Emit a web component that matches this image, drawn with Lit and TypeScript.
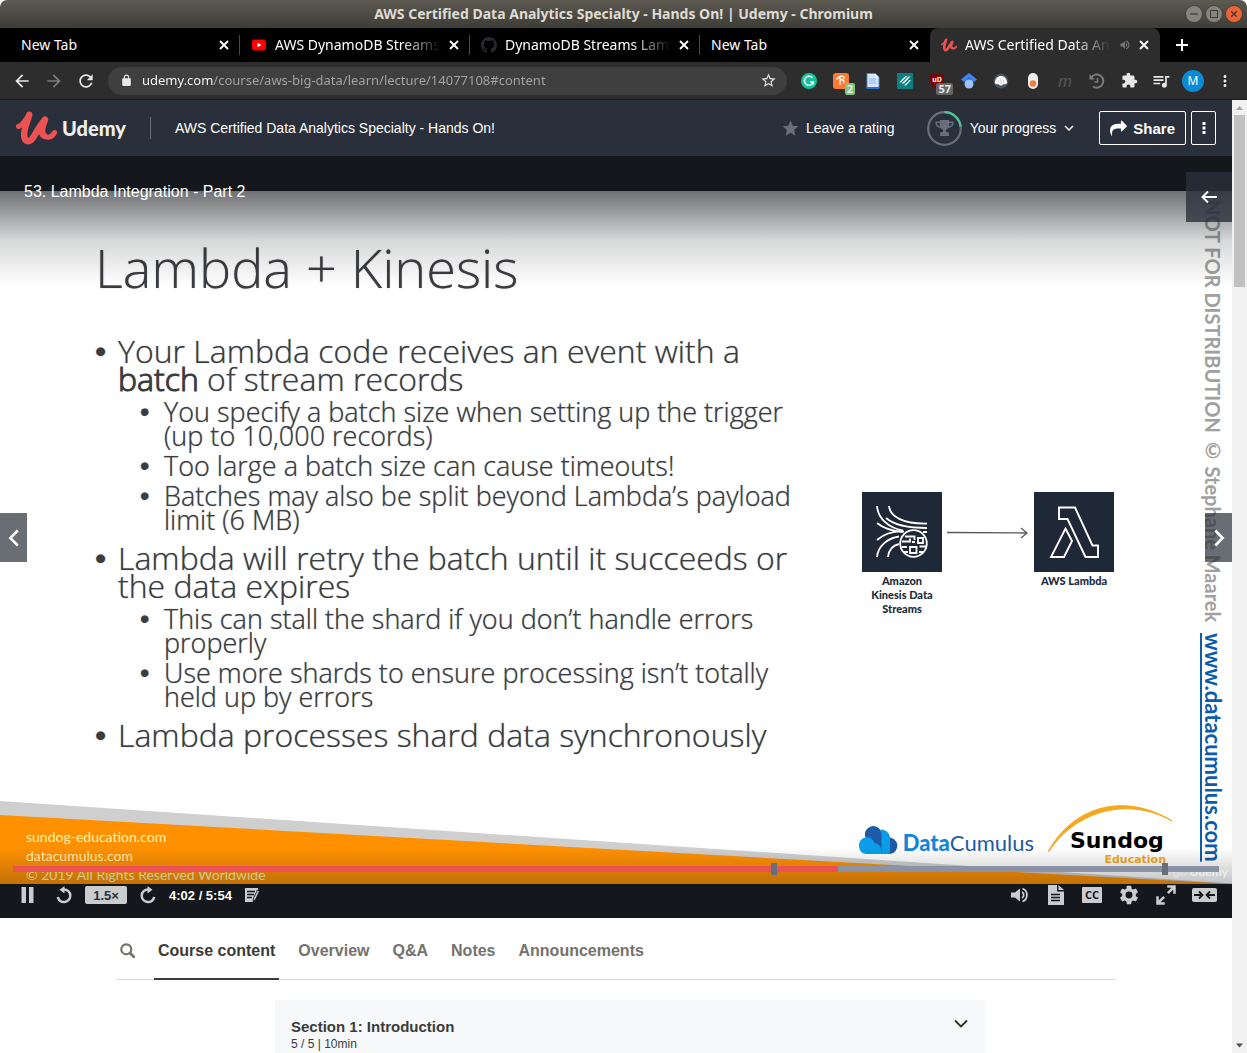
import { LitElement, html, css, svg, nothing, TemplateResult } from 'lit';
import { customElement } from 'lit/decorators.js';
import { classMap } from 'lit/directives/class-map.js';

const icon = (size: number, box: string, body: unknown) =>
  html`<svg width=${size} height=${size} viewBox=${box} aria-hidden="true">${body}</svg>`;

const path24 = (size: number, d: string) =>
  icon(size, '0 0 24 24', svg`<path fill="currentColor" d=${d}></path>`);

const D = {
  back: 'M20 11H7.83l5.59-5.59L12 4l-8 8 8 8 1.41-1.41L7.83 13H20z',
  forward: 'M4 13h12.17l-5.59 5.59L12 20l8-8-8-8-1.41 1.41L16.17 11H4z',
  reload:
    'M17.65 6.35C16.2 4.9 14.21 4 12 4c-4.42 0-7.99 3.58-7.99 8s3.57 8 7.99 8c3.73 0 6.84-2.55 7.73-6h-2.08c-.82 2.33-3.04 4-5.65 4-3.31 0-6-2.69-6-6s2.69-6 6-6c1.66 0 3.14.69 4.22 1.78L13 11h7V4z',
  lock: 'M18 8h-1V6c0-2.76-2.24-5-5-5S7 3.24 7 6v2H6c-1.1 0-2 .9-2 2v10c0 1.1.9 2 2 2h12c1.1 0 2-.9 2-2V10c0-1.1-.9-2-2-2zM9 6c0-1.66 1.34-3 3-3s3 1.34 3 3v2H9V6z',
  starLine:
    'M22 9.24l-7.19-.62L12 2 9.19 8.63 2 9.24l5.46 4.73L5.82 21 12 17.27 18.18 21l-1.63-7.03L22 9.24zM12 15.4l-3.76 2.27 1-4.28-3.32-2.88 4.38-.38L12 6.1l1.71 4.04 4.38.38-3.32 2.88 1 4.28L12 15.4z',
  star: 'M12 17.27L18.18 21l-1.64-7.03L22 9.24l-7.19-.61L12 2 9.19 8.63 2 9.24l5.46 4.73L5.82 21z',
  puzzle:
    'M20.5 11H19V7c0-1.1-.9-2-2-2h-4V3.5C13 2.12 11.88 1 10.5 1S8 2.12 8 3.5V5H4c-1.1 0-1.99.9-1.99 2v3.8H3.5c1.49 0 2.7 1.21 2.7 2.7s-1.21 2.7-2.7 2.7H2V20c0 1.1.9 2 2 2h3.8v-1.5c0-1.49 1.21-2.7 2.7-2.7 1.49 0 2.7 1.21 2.7 2.7V22H17c1.1 0 2-.9 2-2v-4h1.5c1.38 0 2.5-1.12 2.5-2.5S21.88 11 20.5 11z',
  queue:
    'M15 6H3v2h12V6zm0 4H3v2h12v-2zM3 16h8v-2H3v2zM17 6v8.18c-.31-.11-.65-.18-1-.18-1.66 0-3 1.34-3 3s1.34 3 3 3 3-1.34 3-3V8h3V6h-5z',
  dots: 'M12 8c1.1 0 2-.9 2-2s-.9-2-2-2-2 .9-2 2 .9 2 2 2zm0 2c-1.1 0-2 .9-2 2s.9 2 2 2 2-.9 2-2-.9-2-2-2zm0 6c-1.1 0-2 .9-2 2s.9 2 2 2 2-.9 2-2-.9-2-2-2z',
  speaker:
    'M3 9v6h4l5 5V4L7 9H3zm13.5 3c0-1.77-1.02-3.29-2.5-4.03v8.05c1.48-.73 2.5-2.25 2.5-4.02zM14 3.23v2.06c2.89.86 5 3.54 5 6.71s-2.11 5.85-5 6.71v2.06c4.01-.91 7-4.49 7-8.77s-2.99-7.86-7-8.77z',
  github:
    'M8 0C3.58 0 0 3.58 0 8c0 3.54 2.29 6.53 5.47 7.59.4.07.55-.17.55-.38 0-.19-.01-.82-.01-1.49-2.01.37-2.53-.49-2.69-.94-.09-.23-.48-.94-.82-1.13-.28-.15-.68-.52-.01-.53.63-.01 1.08.58 1.23.82.72 1.21 1.87.87 2.33.66.07-.52.28-.87.51-1.07-1.78-.2-3.64-.89-3.64-3.95 0-.87.31-1.59.82-2.15-.08-.2-.36-1.02.08-2.12 0 0 .67-.21 2.2.82.64-.18 1.32-.27 2-.27s1.36.09 2 .27c1.53-1.04 2.2-.82 2.2-.82.44 1.1.16 1.92.08 2.12.51.56.82 1.27.82 2.15 0 3.07-1.87 3.75-3.65 3.95.29.25.54.73.54 1.48 0 1.07-.01 1.93-.01 2.2 0 .21.15.46.55.38A8.01 8.01 0 0 0 16 8c0-4.42-3.58-8-8-8z',
  share:
    'M1792 640q0 26-19 45l-512 512q-19 19-45 19t-45-19-19-45v-256h-224q-98 0-175.5 6t-154 21.5-133 42.5-105.5 69.5-80 101-48.5 138.5-17.5 181q0 55 5 123 0 6 2.5 23.5t2.5 26.5q0 15-8.5 25t-23.5 10q-16 0-28-17-7-9-13-22t-13.5-30-10.5-24q-127-285-127-451 0-199 53-333 162-403 875-403h224v-256q0-26 19-45t45-19 45 19l512 512q19 19 19 45z',
  gear:
    'M19.43 12.98c.04-.32.07-.64.07-.98s-.03-.66-.07-.98l2.11-1.65c.19-.15.24-.42.12-.64l-2-3.46c-.12-.22-.39-.3-.61-.22l-2.49 1c-.52-.4-1.08-.73-1.69-.98l-.38-2.65C14.46 2.18 14.25 2 14 2h-4c-.25 0-.46.18-.49.42l-.38 2.65c-.61.25-1.17.59-1.69.98l-2.49-1c-.23-.09-.49 0-.61.22l-2 3.46c-.13.22-.07.49.12.64l2.11 1.65c-.04.32-.07.65-.07.98s.03.66.07.98l-2.11 1.65c-.19.15-.24.42-.12.64l2 3.46c.12.22.39.3.61.22l2.49-1c.52.4 1.08.73 1.69.98l.38 2.65c.03.24.24.42.49.42h4c.25 0 .46-.18.49-.42l.38-2.65c.61-.25 1.17-.59 1.69-.98l2.49 1c.23.09.49 0 .61-.22l2-3.46c.12-.22.07-.49-.12-.64l-2.11-1.65zM12 15.8a3.8 3.8 0 1 1 0-7.6 3.8 3.8 0 0 1 0 7.6z',
};

const udemyMark = (w: number, h: number) => html`<svg width=${w} height=${h} viewBox="0 0 41 34" aria-hidden="true">
  <path d="M2.500 15.500C7 14.500 9 9 13 4M27 24C30.500 28 36 26.500 38.600 21.500"
    fill="none" stroke="#ec5252" stroke-width="5" stroke-linecap="round" stroke-linejoin="round"></path>
  <path d="M13.200 3.700C11.500 11 7.500 18 8.200 25C9 32 14 31.500 17.500 26C21 20 25 13 29 8.700C27 14 23.500 21 28 24.500"
    fill="none" stroke="#ec5252" stroke-width="6.500" stroke-linecap="round" stroke-linejoin="round"></path>
</svg>`;

interface BrowserTab {
  title: string;
  favicon?: TemplateResult;
  active?: boolean;
  divided?: boolean;
}

@customElement('browser-chrome')
class BrowserChrome extends LitElement {
  static styles = css`
    :host { display: block; font-family: 'Noto Sans', 'Open Sans', sans-serif; color: #fff; }
    button { font: inherit; color: inherit; background: none; border: 0; padding: 0; display: flex; align-items: center; justify-content: center; }
    svg { display: block; flex: none; }
    .frame { background: #fff; }
    .titlebar {
      display: grid; grid-template-columns: 1fr auto 1fr; align-items: center; height: 28px; padding: 0 5px;
      background: linear-gradient(#5d5a51, #3d3c37); border-radius: 7px 7px 0 0;
      font-size: 14px; font-weight: 700; line-height: 20px; color: #dfdbd2;
    }
    .wm { display: flex; justify-content: flex-end; gap: 4px; }
    .wm button { width: 16px; height: 16px; border-radius: 50%; background: #85837b; color: #3c3b37; box-shadow: 0 0 0 1px #45433e; }
    .wm .close { background: #ee6334; }
    .strip { display: flex; height: 34px; padding-left: 10px; background: #000; font-size: 14px; line-height: 20px; }
    .tab { position: relative; box-sizing: border-box; flex: 0 1 230px; min-width: 0; display: flex; align-items: center; gap: 8px; padding: 0 11px 1px; }
    .tab.divided::after { content: ''; position: absolute; right: 0; top: 7px; width: 1px; height: 20px; background: #4a4a4a; }
    .tab.active { background: #2d2d2d; border-radius: 8px 8px 0 0; }
    .tab .name { flex: 1; min-width: 0; overflow: hidden; white-space: nowrap; }
    .tab .fade { -webkit-mask-image: linear-gradient(90deg, #000 calc(100% - 40px), transparent); mask-image: linear-gradient(90deg, #000 calc(100% - 40px), transparent); }
    .sound { color: #77787a; }
    .plus { width: 44px; }
    .bar { display: flex; align-items: center; height: 37px; padding: 0 6px; background: #2d2d2d; border-bottom: 1px solid #1c1c1c; color: #e8e8e8; }
    .tool { position: relative; width: 32px; height: 32px; flex: none; }
    .dim { color: #7b7b7b; }
    .box { flex: 1; min-width: 0; display: flex; align-items: center; gap: 9px; height: 28px; margin: 0 6px; padding: 0 10px 0 12px; border-radius: 14px; background: #3f3f3f; }
    .url {
      flex: 1; min-width: 0; border: 0; padding: 0 0 2px; outline: 0; font: inherit; font-size: 13px; color: transparent;
      background: linear-gradient(90deg, #fff 71px, #a5a5a5 71px); -webkit-background-clip: text; background-clip: text;
    }
    .badge { position: absolute; right: 2px; bottom: 2px; padding: 0 2px; border-radius: 2px; background: #7cc47f; font-size: 11px; font-weight: 700; line-height: 12px; }
    .badge.grey { right: 0; background: #666; }
    .avatar { width: 22px; height: 22px; border-radius: 50%; background: #0b8ad6; font-size: 12px; line-height: 22px; text-align: center; color: #fff; }
    .em { font-style: italic; font-size: 16px; color: #555; }
  `;

  private cross = icon(10, '0 0 10 10', svg`<path d="M1 1L9 9M9 1L1 9" stroke="currentColor" stroke-width="1.800"></path>`);

  private tabs: BrowserTab[] = [
    { title: 'New Tab', divided: true },
    {
      title: 'AWS DynamoDB Streams', divided: true,
      favicon: icon(16, '0 0 16 16', svg`<rect x="1" y="2.500" width="14" height="11" rx="3" fill="#f00"></rect><path d="M6.500 5.700v4.600l4-2.300z" fill="#fff"></path>`),
    },
    { title: 'DynamoDB Streams Lambda', divided: true, favicon: icon(16, '0 0 16 16', svg`<path fill="#24292e" d=${D.github}></path>`) },
    { title: 'New Tab' },
    { title: 'AWS Certified Data Analytics', active: true, favicon: udemyMark(16, 14) },
  ];

  private extensions: { label: string; art: TemplateResult }[] = [
    { label: 'Grammar check', art: icon(16, '0 0 16 16', svg`<circle cx="8" cy="8" r="8" fill="#15c39a"></circle><path d="M11.500 5A4.500 4.500 0 1 0 12.300 9H9.200M12.300 9v2.500" fill="none" stroke="#fff" stroke-width="1.400"></path>`) },
    { label: 'Coupons', art: html`${icon(16, '0 0 16 16', svg`<rect width="16" height="16" rx="3" fill="#ff7a30"></rect><path d="M7 3v9M3.500 6.500C6 3 11 2 11 4.500S8 7 7 6.500C10 6.500 12 8 10.500 10.500" fill="none" stroke="#fff" stroke-width="1.300"></path>`)}<span class="badge">2</span>` },
    { label: 'Docs', art: icon(16, '0 0 16 16', svg`<path d="M2 .5h8l4 4v11H2z" fill="#d5e6fb" stroke="#4a86d8"></path><path d="M10 .5v4h4z" fill="#fff"></path><path d="M4 6h7M4 8h7M4 10h7" stroke="#8ab4ea"></path><path d="M2 14h12v2H2z" fill="#2f6fd0"></path>`) },
    { label: 'Notes', art: icon(16, '0 0 16 16', svg`<rect width="16" height="16" rx="1" fill="#0d7f83"></rect><path d="M2 9.500L8.500 3h2L4 9.500zM4.500 10.500L11.500 3.500h2L7 10.500zM7 12.500L12.500 7h1.500L9 12.500z" fill="#e9f5f5"></path>`) },
    { label: 'Ad blocker', art: html`${icon(16, '0 0 16 16', svg`<path d="M8 0q3 2 7 1.500V8q0 5-7 8-7-3-7-8V1.500Q5 2 8 0z" fill="#800000"></path><text x="8" y="9" font-size="7" font-weight="700" fill="#fff" text-anchor="middle" font-family="Noto Sans">uD</text>`)}<span class="badge grey">57</span>` },
    { label: 'Scholar', art: icon(16, '0 0 16 16', svg`<path d="M8 0L16 6.500 13 9H3L0 6.500z" fill="#4285f4"></path><circle cx="8" cy="11" r="4.500" fill="#a0c3ff"></circle><path d="M3.500 9.500a4.800 4.800 0 0 1 9 0L13 8 8 4 3 8z" fill="#356ac3"></path>`) },
    { label: 'Shell', art: icon(16, '0 0 16 16', svg`<circle cx="8" cy="8" r="7.500" fill="#47535f"></circle><path d="M1.800 10C2 5.500 5 3 8 3s6 2.500 6.200 7q-1.500 2-3.500 1l-1.700 1.500H7L5.300 11q-2 1-3.500-1z" fill="#fff"></path><path d="M8 11V6M6 10L5 7M10 10l1-3" stroke="#aab2ba" stroke-width=".6"></path>`) },
    { label: 'Toggle', art: icon(16, '0 0 16 16', svg`<rect x="3" y="0" width="10" height="16" rx="5" fill="#eee"></rect><circle cx="8" cy="10.500" r="3.200" fill="#f47b3a"></circle>`) },
    { label: 'Mendeley', art: html`<span class="em">m</span>` },
    { label: 'History', art: html`<span class="dim">${icon(18, '0 0 18 18', svg`<path d="M3.200 5.500A6.600 6.600 0 1 1 5 14.500" fill="none" stroke="currentColor" stroke-width="2"></path><path d="M1.500 2v5.500H7z" fill="currentColor"></path><path d="M9.500 6v4h-3" fill="none" stroke="currentColor" stroke-width="1.600"></path>`)}</span>` },
    { label: 'Extensions', art: path24(17, D.puzzle) },
    { label: 'Media controls', art: path24(20, D.queue) },
    { label: 'Profile', art: html`<span class="avatar">M</span>` },
    { label: 'Menu', art: path24(18, D.dots) },
  ];

  render() {
    return html`
      <header class="frame">
        <div class="titlebar">
          <span></span>
          <span>AWS Certified Data Analytics Specialty - Hands On! | Udemy - Chromium</span>
          <div class="wm">
            <button aria-label="Minimize">${icon(10, '0 0 10 10', svg`<path d="M1 5h8" stroke="currentColor" stroke-width="1.200"></path>`)}</button>
            <button aria-label="Maximize">${icon(10, '0 0 10 10', svg`<path d="M1.500 1.500h7v7h-7z" fill="none" stroke="currentColor"></path>`)}</button>
            <button class="close" aria-label="Close window">${icon(8, '0 0 10 10', svg`<path d="M1.500 1.500l7 7M8.500 1.500l-7 7" stroke="currentColor" stroke-width="1.600"></path>`)}</button>
          </div>
        </div>
        <div class="strip">
          ${this.tabs.map((t) => html`
            <div class=${classMap({ tab: true, active: !!t.active, divided: !!t.divided })}>
              ${t.favicon ?? nothing}
              <span class=${classMap({ name: true, fade: t.title !== 'New Tab' })}>${t.title}</span>
              ${t.active ? html`<span class="sound">${path24(12, D.speaker)}</span>` : nothing}
              <button aria-label="Close tab">${this.cross}</button>
            </div>`)}
          <button class="plus" aria-label="New tab">${icon(12, '0 0 12 12', svg`<path d="M6 0v12M0 6h12" stroke="currentColor" stroke-width="2"></path>`)}</button>
        </div>
        <div class="bar">
          <button class="tool" aria-label="Back">${path24(20, D.back)}</button>
          <button class="tool dim" aria-label="Forward">${path24(20, D.forward)}</button>
          <button class="tool" aria-label="Reload">${path24(20, D.reload)}</button>
          <div class="box">
            ${path24(13, D.lock)}
            <input class="url" aria-label="Address" value="udemy.com/course/aws-big-data/learn/lecture/14077108#content" />
            <button aria-label="Bookmark">${path24(17, D.starLine)}</button>
          </div>
          ${this.extensions.map((e) => html`<button class="tool" aria-label=${e.label}>${e.art}</button>`)}
        </div>
      </header>`;
  }
}

@customElement('course-header')
class CourseHeader extends LitElement {
  static styles = css`
    :host { display: block; background: #29303b; color: #fff; font-size: 14px; }
    svg { display: block; flex: none; }
    a { color: inherit; text-decoration: none; }
    button { font: inherit; color: inherit; background: none; border: 0; padding: 0; display: flex; align-items: center; justify-content: center; }
    .row { display: flex; align-items: center; height: 56px; padding: 0 16px; white-space: nowrap; }
    .logo { display: flex; align-items: center; gap: 5px; font: 900 20px/24px Lato, sans-serif; color: #f0efec; }
    .course { margin-left: 24px; padding-left: 24px; border-left: 1px solid #686f7a; line-height: 22px; }
    .rate { margin-left: auto; gap: 6px; }
    .star, .caret { color: #686f7a; }
    .progress { margin: 0 25px 0 32px; gap: 8px; }
    .progress .caret { color: #fff; }
    .outlined { height: 34px; border: 1px solid #fff; border-radius: 2px; font-size: 15px; font-weight: 700; box-sizing: border-box; }
    .share { gap: 6px; padding: 0 10px; }
    .more { width: 25px; margin-left: 5px; }
  `;
  render() {
    return html`
      <header class="row">
        <a class="logo" href="#home">${udemyMark(41, 34)}<span>Udemy</span></a>
        <a class="course" href="#course">AWS Certified Data Analytics Specialty - Hands On!</a>
        <button class="rate"><span class="star">${path24(19, D.star)}</span>Leave a rating</button>
        <button class="progress">
          ${icon(35, '0 0 35 35', svg`
            <circle cx="17.500" cy="17.500" r="16.300" fill="none" stroke="#686f7a" stroke-width="2.200"></circle>
            <path d="M17.500 1.200A16.300 16.300 0 0 1 33.600 15.500" fill="none" stroke="#50c594" stroke-width="2.200"></path>
            <path d="M13 9h9v1.500h4.500v2c0 2.500-2.500 4.200-5.200 4.500-.8 1-1.700 1.600-2.300 1.800v2.200h1.500c1 0 1.500.8 1.500 2v2h-9v-2c0-1.200.5-2 1.500-2H16v-2.200c-.6-.2-1.500-.8-2.300-1.800C11 16.700 8.500 15 8.500 12.500v-2H13zm-3 3v.5c0 1.200 1.200 2.300 3 2.700-.2-1-.3-2-.3-3.200zm15 0h-2.700c0 1.200-.1 2.200-.3 3.200 1.800-.4 3-1.500 3-2.700z" fill="#686f7a" fill-rule="evenodd"></path>`)}
          Your progress
          <span class="caret">${icon(10, '0 0 10 10', svg`<path d="M1 3l4 4 4-4" fill="none" stroke="currentColor" stroke-width="1.500"></path>`)}</span>
        </button>
        <button class="outlined share">${icon(17, '0 0 1792 1792', svg`<path fill="currentColor" d=${D.share}></path>`)}Share</button>
        <button class="outlined more" aria-label="More">${icon(12, '0 0 12 12', svg`<path d="M4.500 0h3v3h-3zM4.500 4.500h3v3h-3zM4.500 9h3v3h-3z" fill="currentColor"></path>`)}</button>
      </header>`;
  }
}

interface Point { text: TemplateResult; sub?: string[][]; }

@customElement('lecture-slide')
class LectureSlide extends LitElement {
  static styles = css`
    :host { display: block; isolation: isolate; }
    svg { display: block; }
    .slide {
      position: relative; display: grid; grid-template-columns: 1fr auto 118px; grid-template-rows: 1fr auto;
      aspect-ratio: 16 / 9; overflow: hidden; background: #fff; color: #3b3c3f;
      font-family: 'Open Sans', 'Noto Sans', sans-serif; font-weight: 300;
    }
    .wedge { position: absolute; left: 0; bottom: 0; width: 100%; height: 84px; }
    .copy { padding: 44px 0 0 95px; white-space: nowrap; text-shadow: 0 0 1px rgba(59,60,63,.7); }
    h1 { margin: 0; font-size: 54px; font-weight: inherit; line-height: 64px; }
    ul { margin: 0; padding: 0; list-style: none; }
    .points { display: grid; gap: 12px; margin-top: 38px; font-size: 32px; line-height: 28px; }
    .point { display: grid; grid-template-columns: 23px 1fr; }
    .point::before, .subpoint::before { content: '•'; font-family: 'Liberation Sans', sans-serif; }
    .subs { grid-column: 2; display: grid; gap: 6px; margin-top: 7px; padding-left: 22px; font-size: 27px; line-height: 24px; }
    .subpoint { display: grid; grid-template-columns: 24px 1fr; }
    .heavy { -webkit-text-stroke: 1px #3b3c3f; }
    .diagram { display: flex; align-items: flex-start; padding-top: 301px; font: 900 11px/14px Lato, sans-serif; color: #222b3a; }
    .node { width: 80px; margin: 0; text-align: center; }
    .node figcaption { margin-top: 2px; }
    .link { margin: 35px 6px 0 5px; }
    .mark {
      grid-column: 3; grid-row: 1 / 3; writing-mode: vertical-rl; justify-self: end; padding: 9px 7px 0 0; white-space: nowrap;
      font: 700 20px/24px Lato, 'Open Sans', sans-serif; color: #a0a0a0; z-index: 1;
    }
    .mark a { margin-inline-start: 6px; font-size: 22px; color: #0b5cad; }
    .foot { grid-column: 1 / 3; display: flex; justify-content: space-between; position: relative; height: 84px; margin-right: -60px; }
    .legal { padding: 27px 0 0 26px; font: 400 14px/19px Lato, sans-serif; color: #fff3b0; }
    .brands { display: flex; align-items: flex-start; gap: 14px; }
    .data { display: flex; gap: 4px; align-items: center; margin-top: 26px; font: 400 22px/30px Lato, sans-serif; color: #1d5ba6; }
    .data svg { margin-bottom: 6px; }
    .data b { font-weight: 900; color: #1486d8; }
    .sundog { position: relative; width: 126px; padding: 28px 0 0 22px; box-sizing: border-box; font: 700 22px/26px 'DejaVu Sans', sans-serif; color: #000; }
    .sundog svg { position: absolute; left: 0; top: 5px; }
    .edu { display: block; padding-right: 8px; text-align: right; font-size: 11px; line-height: 12px; color: #f5a81c; }
  `;

  private points: Point[] = [
    {
      text: html`Your Lambda code receives an event with a<br /><span class="heavy">batch</span> of stream records`,
      sub: [
        ['You specify a batch size when setting up the trigger', '(up to 10,000 records)'],
        ['Too large a batch size can cause timeouts!'],
        ['Batches may also be split beyond Lambda’s payload', 'limit (6 MB)'],
      ],
    },
    {
      text: html`Lambda will retry the batch until it succeeds or<br />the data expires`,
      sub: [
        ['This can stall the shard if you don’t handle errors', 'properly'],
        ['Use more shards to ensure processing isn’t totally', 'held up by errors'],
      ],
    },
    { text: html`Lambda processes shard data synchronously` },
  ];

  render() {
    return html`
      <article class="slide">
        <svg class="wedge" viewBox="0 0 1232 84" preserveAspectRatio="none" aria-hidden="true">
          <path d="M0 1L1232 83.500V84H0z" fill="#d0cfd0"></path><path d="M0 15L1232 84H0z" fill="#ff9000"></path>
        </svg>
        <div class="copy">
          <h1>Lambda + Kinesis</h1>
          <ul class="points">
            ${this.points.map((p) => html`
              <li class="point"><span>${p.text}</span>
                ${p.sub ? html`<ul class="subs">${p.sub.map((lines) => html`
                  <li class="subpoint"><span>${lines.map((l, i) => html`${i ? html`<br />` : nothing}${l}`)}</span></li>`)}</ul>` : nothing}
              </li>`)}
          </ul>
        </div>
        <div class="diagram">
          <figure class="node">
            <svg width="80" height="80" viewBox="0 0 80 80" aria-hidden="true">
              <rect width="80" height="80" fill="#1f2836"></rect>
              <g fill="none" stroke="#fff" stroke-width="1.800">
                <path d="M15 14C16 27 27 36 41 38.500M27 14C28 25 42 32 65 31.500M65 36C46 36 32 33 24 26M15 31C20 35 28 39 41 40M15 48C22 42 30 39 42 39.500M15 65C16 54 26 46 37 44.500M26 65C27 57 32 53 37 52M61 40h4"></path>
                <circle cx="51.500" cy="51.500" r="13.300"></circle>
                <path d="M43 44.500h9.500v3.500M40 49.500h8v-3M56 46h5v5h-5zM40 55h5M48 55h6.500v6H48zM57.500 54.500h7M42 60h4M57 60h5M53 50h-3"></path>
              </g>
            </svg>
            <figcaption>Amazon<br />Kinesis Data<br />Streams</figcaption>
          </figure>
          <svg class="link" width="81" height="12" viewBox="0 0 81 12" aria-hidden="true"><path d="M0 5.500L80 6M74 1l6 5-6 5" fill="none" stroke="#555a63" stroke-width="1.300"></path></svg>
          <figure class="node">
            <svg width="80" height="80" viewBox="0 0 80 80" aria-hidden="true">
              <rect width="80" height="80" fill="#1f2836"></rect>
              <path d="M25 15.500H41L58.500 53.500H64V65H51.500L33.500 27H25zM31.500 36.500L38 49 30 65H17z" fill="none" stroke="#fff" stroke-width="1.900"></path>
            </svg>
            <figcaption>AWS Lambda</figcaption>
          </figure>
        </div>
        <div class="mark">NOT FOR DISTRIBUTION © Stephane Maarek <a href="#datacumulus">www.datacumulus.com</a></div>
        <footer class="foot">
          <div class="legal">sundog-education.com<br />datacumulus.com<br />© 2019 All Rights Reserved Worldwide</div>
          <div class="brands">
            <div class="data">
              <svg width="42" height="28" viewBox="0 0 42 28" aria-hidden="true">
                <path d="M31 11.500A8.300 8.300 0 0 1 33 28H30z" fill="#1d5ba6"></path>
                <path d="M24 3.500A9 9 0 0 1 33 11V28H22z" fill="#0b9de8"></path>
                <path d="M8 10A8.300 8.300 0 0 1 24.500 7V28H16z" fill="#1d5ba6"></path>
                <path d="M9 28A8.500 8.500 0 0 1 8 11.500Q15 10.500 17.500 17 24.500 17.500 25 28z" fill="#0b9de8"></path>
              </svg>
              <span><b>Data</b>Cumulus</span>
            </div>
            <div class="sundog">
              <svg width="126" height="48" viewBox="0 0 126 48" aria-hidden="true"><path d="M0 47C24 2 76-14 124 16 80-9 28 6 2 45z" fill="#f5a81c" stroke="#f5a81c"></path></svg>
              Sundog<span class="edu">Education</span>
            </div>
          </div>
        </footer>
      </article>`;
  }
}

@customElement('lecture-player')
class LecturePlayer extends LitElement {
  static styles = css`
    :host { display: block; }
    svg { display: block; flex: none; }
    button { font: inherit; color: inherit; background: none; border: 0; padding: 0; display: flex; align-items: center; justify-content: center; }
    .player { position: relative; padding-top: 35px; background: #14171c; color: #fff; }
    .stage { position: relative; }
    .shade { position: absolute; inset: 0 0 auto; height: 130px; background: linear-gradient(rgba(20,23,28,.9), rgba(20,23,28,.61) 35px, rgba(20,23,28,.17) 85px, rgba(20,23,28,0)); }
    .floor { position: absolute; inset: auto 0 0; height: 36px; background: linear-gradient(rgba(20,23,28,0), rgba(20,23,28,.26)); }
    .title { position: absolute; left: 24px; top: 26px; margin: 0; font-size: 16px; font-weight: 400; line-height: 20px; }
    .open { position: absolute; right: 0; top: 16px; width: 46px; height: 50px; background: rgba(41,48,59,.8); }
    .side { position: absolute; top: 322px; width: 27px; height: 49px; background: rgba(41,48,59,.7); }
    .prev { left: 0; }
    .next { right: 0; }
    .seek { position: absolute; left: 13px; right: 13px; bottom: 12px; height: 6px; }
    .seek input { display: block; appearance: none; -webkit-appearance: none; width: 100%; height: 6px; margin: 0; background: linear-gradient(90deg, #ec5252 68.4%, #8a92a3 68.4%); }
    .seek input::-webkit-slider-thumb { -webkit-appearance: none; width: 1px; height: 6px; opacity: 0; }
    .note { position: absolute; top: -3px; width: 6px; height: 12px; margin-left: -3px; background: #686f7a; }
    .ghost { position: absolute; right: 4px; bottom: 4px; display: flex; align-items: center; gap: 3px; font: 700 12px/16px Lato, sans-serif; color: #fff; opacity: .6; filter: grayscale(1) brightness(2); }
    .controls { display: flex; align-items: center; justify-content: space-between; height: 22px; padding: 0 15px 12px 20px; color: #cbccce; font-size: 13px; font-weight: 700; }
    .group { display: flex; align-items: center; gap: 12px; }
    .right { gap: 16px; }
    .pause { margin-right: 7px; }
    .speed { width: 42px; height: 18px; border-radius: 2px; background: #cbccce; color: #29303b; }
    .time { color: #fff; }
  `;

  private replay = svg`<path d="M9 3.500a6.300 6.300 0 1 1-6.200 7.500" fill="none" stroke="currentColor" stroke-width="2.500"></path><path d="M9.500 0v7.500L4.500 3.800z" fill="currentColor"></path>`;

  render() {
    const stroke = (size: number, d: string, w: number) =>
      icon(size, '0 0 16 16', svg`<path d=${d} fill="none" stroke="currentColor" stroke-width=${w}></path>`);
    return html`
      <section class="player">
        <div class="stage">
          <lecture-slide></lecture-slide>
          <div class="floor"></div>
          <span class="ghost">${udemyMark(16, 14)}Udemy</span>
          <button class="side prev" aria-label="Previous lecture">${stroke(20, 'M11 2L5 8l6 6', 2)}</button>
          <button class="side next" aria-label="Next lecture">${stroke(20, 'M5 2l6 6-6 6', 2)}</button>
          <div class="seek">
            <input type="range" min="0" max="354" value="242" aria-label="Seek" />
            <span class="note" style="left:63.1%"></span><span class="note" style="left:95.5%"></span>
          </div>
        </div>
        <div class="shade"></div>
        <h2 class="title">53. Lambda Integration - Part 2</h2>
        <button class="open" aria-label="Open course sidebar">${stroke(16, 'M16 8H1.500M7 2.500L1.500 8 7 13.500', 1.9)}</button>
        <div class="controls">
          <div class="group">
            <button class="pause" aria-label="Pause">${icon(16, '0 0 16 16', svg`<path d="M1.500 0H6v16H1.500zM9 0h4.500v16H9z" fill="currentColor"></path>`)}</button>
            <button aria-label="Rewind">${icon(18, '0 0 18 18', this.replay)}</button>
            <button class="speed">1.5×</button>
            <button aria-label="Forward">${icon(18, '0 0 18 18', svg`<g transform="matrix(-1 0 0 1 18 0)">${this.replay}</g>`)}</button>
            <span class="time">4:02 / 5:54</span>
            <button aria-label="Add a note">${icon(16, '0 0 16 16', svg`<path d="M1 1h13v3l-4 9-1 2H1z" fill="currentColor"></path><path d="M3 4.500h8M3 7.500h7M3 10.500h5" stroke="#14171c" stroke-width="1.300"></path><path d="M9 14.500l.6-3.500L13.500 3l2 1.200-3.800 8z" fill="currentColor" stroke="#14171c" stroke-width=".9"></path>`)}</button>
          </div>
          <div class="group right">
            <button aria-label="Volume">${icon(20, '0 0 20 20', svg`<path d="M1 7.500h4l5-4v13l-5-4H1z" fill="currentColor"></path><path d="M12 7a3.500 3.500 0 0 1 0 6M12.500 3.500a7 7 0 0 1 0 13" fill="none" stroke="currentColor" stroke-width="1.800"></path>`)}</button>
            <button aria-label="Transcript">${icon(20, '0 0 20 20', svg`<path d="M2 0h9v6.500h7V20H2z" fill="currentColor"></path><path d="M12.500 0L18 5h-5.500z" fill="currentColor"></path><path d="M5 9.500h9M5 12.500h9M5 15.500h9" stroke="#14171c" stroke-width="1.400"></path>`)}</button>
            <button aria-label="Captions">${icon(20, '0 0 20 20', svg`<rect y="2" width="20" height="16" rx="1" fill="currentColor"></rect><text x="10" y="14" font-size="11" font-weight="700" fill="#14171c" text-anchor="middle" font-family="Open Sans">CC</text>`)}</button>
            <button aria-label="Settings">${path24(22, D.gear)}</button>
            <button aria-label="Full screen">${stroke(20, 'M9.500 6.500L14 2M9 1.200h5.800V7M6.500 9.500L2 14M1.200 9v5.800H7', 2)}</button>
            <button aria-label="Exit theater"><svg width="25" height="14" viewBox="0 0 25 14" aria-hidden="true"><rect width="25" height="14" rx="2" fill="currentColor"></rect><path d="M2 7h8M7 3.500L10.500 7 7 10.500M23 7h-8M18 3.500L14.500 7l3.500 3.500" fill="none" stroke="#14171c" stroke-width="1.800"></path></svg></button>
          </div>
        </div>
      </section>`;
  }
}

@customElement('course-details')
class CourseDetails extends LitElement {
  static styles = css`
    :host { display: block; background: #fff; }
    svg { display: block; }
    button { font: inherit; color: inherit; background: none; border: 0; padding: 0; }
    .tabs { display: flex; gap: 15px; max-width: 1000px; height: 61px; margin: 0 auto; border-bottom: 1px solid #dbdcd6; font-size: 16px; font-weight: 700; color: #73726c; }
    .tab { height: 62px; box-sizing: border-box; padding: 5px 4px 0; border-bottom: 2px solid transparent; }
    .tab.on { color: #3b3b3b; border-color: #3b3b3b; }
    .sections { padding: 20px 0 0 28px; }
    .card { display: flex; justify-content: space-between; max-width: 678px; margin: 0 auto; padding: 18px 16px; background: #f7f8fa; color: #3b3b3b; }
    h3 { margin: 0; font-size: 15px; line-height: 18px; }
    .meta { margin: 0; font-size: 12px; line-height: 16px; }
    .toggle { align-self: flex-start; }
  `;
  render() {
    return html`
      <nav class="tabs">
        <button class="tab" aria-label="Search">${icon(15, '0 0 15 15', svg`<circle cx="6.300" cy="6.300" r="5" fill="none" stroke="currentColor" stroke-width="2.200"></circle><path d="M10 10l4 4" stroke="currentColor" stroke-width="2.600" stroke-linecap="round"></path>`)}</button>
        ${['Course content', 'Overview', 'Q&A', 'Notes', 'Announcements'].map((t, i) => html`<button class=${classMap({ tab: true, on: i === 0 })}>${t}</button>`)}
      </nav>
      <div class="sections">
        <section class="card">
          <div><h3>Section 1: Introduction</h3><p class="meta">5 / 5 | 10min</p></div>
          <button class="toggle" aria-label="Expand section">${icon(16, '0 0 16 16', svg`<path d="M2 2.500L8 8.500l6-6" fill="none" stroke="#29303b" stroke-width="1.900"></path>`)}</button>
        </section>
      </div>`;
  }
}

@customElement('app-root')
class AppRoot extends LitElement {
  static styles = css`
    :host { display: flex; flex-direction: column; height: 100vh; overflow: hidden; font-family: 'Liberation Sans', Arial, sans-serif; }
    .view { flex: 1; min-height: 0; display: flex; }
    .page { flex: 1; min-width: 0; overflow: hidden; background: #fff; }
    .scroll { display: flex; flex-direction: column; align-items: center; width: 15px; background: #f1f1f1; }
    .scroll svg { display: block; flex: none; }
    .thumb { width: 11px; height: 18%; background: #c1c1c1; margin-bottom: auto; }
  `;
  render() {
    return html`
      <browser-chrome></browser-chrome>
      <div class="view">
        <main class="page">
          <course-header></course-header>
          <lecture-player></lecture-player>
          <course-details></course-details>
        </main>
        <div class="scroll">
          ${icon(15, '0 0 15 15', svg`<path d="M4 10l3.500-4 3.500 4z" fill="#a3a3a3"></path>`)}
          <div class="thumb"></div>
          ${icon(15, '0 0 15 15', svg`<path d="M4 5.500h7l-3.500 4z" fill="#505050"></path>`)}
        </div>
      </div>`;
  }
}
